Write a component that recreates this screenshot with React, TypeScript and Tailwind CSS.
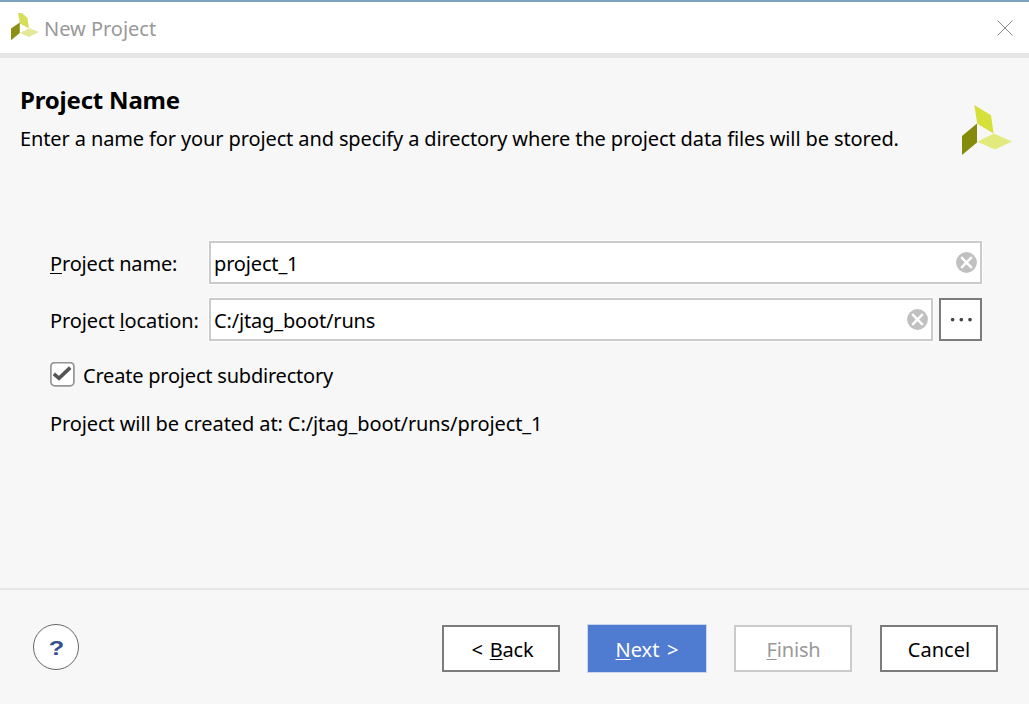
import React from "react";

function Logo({ className }: { className?: string }) {
  return (
    <svg viewBox="0 0 50 50" className={className} aria-hidden="true">
      <path d="M12.3 0 29 10.3 31.6 28.6 15.3 18.7Z" fill="#d6e03a" />
      <path d="M0 31 15 18.5V37.5L0 50Z" fill="#848a0b" />
      <path d="M15.3 36.8 31.8 28.6 50 36.5 33 44.5Z" fill="#e3ea7d" />
    </svg>
  );
}

function TitleLogo() {
  return (
    <svg viewBox="0 0 28 28" className="mb-px size-7" aria-hidden="true">
      <path d="M7 0H11L16.5 5 18 15.5 8.8 10.5Z" fill="#d6de5c" />
      <path d="M0 15.5 8.8 9.5V20L0 27.2Z" fill="#8b8f14" />
      <path d="M8.8 20 18.3 15.2 28 19 18 24Z" fill="#e4e89a" />
    </svg>
  );
}

function ClearIcon() {
  return (
    <svg viewBox="0 0 22 22" className="size-[22px] shrink-0" aria-hidden="true">
      <circle cx="11.5" cy="10.5" r="10.4" fill="#c0c0c0" />
      <path d="M6.2 5.2 16.8 15.8M16.8 5.2 6.2 15.8" stroke="#fff" strokeWidth="2.4" fill="none" />
    </svg>
  );
}

function Key({ children }: { children: string }) {
  return (
    <span className="underline decoration-1 underline-offset-[2px] [text-decoration-skip-ink:none]">
      {children}
    </span>
  );
}

function Field({ value, width }: { value: string; width: string }) {
  return (
    <div
      className={`flex h-[43px] items-center justify-between border-2 border-[#cbcbcb] bg-white pr-[3px] pl-[3px] outline outline-[#fcfcfc] ${width}`}
    >
      <span className="pt-0.5 tracking-[-0.16px]">{value}</span>
      <ClearIcon />
    </div>
  );
}

export default function App() {
  return (
    <div className="flex h-[704px] w-[1029px] flex-col overflow-hidden bg-[#f7f7f7] font-['Noto_Sans',sans-serif] text-[20px] leading-7 whitespace-nowrap text-black">
      <header className="flex h-[58px] shrink-0 items-center justify-between border-t-2 border-b-[5px] border-t-[#7ba3bd] border-b-[#e6e6e6] bg-white pr-4 pl-[11px]">
        <div className="flex items-center gap-[5px]">
          <TitleLogo />
          <h1 className="pt-0.5 tracking-[-0.02px] text-[#999]">New Project</h1>
        </div>
        <svg viewBox="0 0 16 16" className="size-4" aria-hidden="true">
          <path d="M.5.5 15.5 15.5M15.5.5.5 15.5" stroke="#888" strokeWidth="1" fill="none" />
        </svg>
      </header>

      <main className="flex h-[530px] shrink-0 flex-col">
        <section className="flex h-[183px] justify-between pr-[17px] pl-5">
          <div className="pt-[27px]">
            <h2 className="text-[24px] leading-[30px] font-bold tracking-[-0.2px]">Project Name</h2>
            <p className="pt-[10px] tracking-[-0.12px]">
              Enter a name for your project and specify a directory where the project data files will be stored.
            </p>
          </div>
          <Logo className="mt-[47px] size-[50px]" />
        </section>

        <form className="flex flex-col pl-[50px]">
          <div className="flex items-center">
            <label className="w-[159px] pt-0.5 tracking-[-0.17px]">
              <Key>P</Key>roject name:
            </label>
            <Field value="project_1" width="w-[773px]" />
          </div>
          <div className="mt-[14px] flex items-center">
            <label className="w-[159px] pt-0.5 tracking-[-0.12px]">
              Project <Key>l</Key>ocation:
            </label>
            <Field value="C:/jtag_boot/runs" width="w-[724px]" />
            <button type="button" className="ml-[6px] flex size-[43px] items-center justify-center border-2 border-[#7c7c7c] bg-white">
              <svg viewBox="0 0 22 4" className="h-1 w-[22px]" fill="#444" aria-hidden="true">
                <circle cx="2.6" cy="1.7" r="1.8" />
                <circle cx="11.3" cy="1.7" r="1.8" />
                <circle cx="20" cy="1.7" r="1.8" />
              </svg>
            </button>
          </div>
          <div className="mt-5 flex h-[27px] items-center">
            <svg viewBox="0 0 25 25" className="size-[25px]" aria-hidden="true">
              <rect x="0.9" y="0.6" width="23" height="23.2" rx="3.8" fill="#fff" stroke="#959595" strokeWidth="1.7" />
              <path d="M3.9 11.9 9 16.4 20.2 5.6" fill="none" stroke="#555" strokeWidth="3.6" />
            </svg>
            <span className="pt-[3px] pl-2 tracking-[-0.21px]">Create project subdirectory</span>
          </div>
          <p className="mt-[22px] tracking-[-0.1px]">Project will be created at: C:/jtag_boot/runs/project_1</p>
        </form>
      </main>

      <footer className="flex h-[116px] shrink-0 items-start justify-between border-t-2 border-[#e6e6e6] pt-[34px] pr-[31px] pl-[33px]">
        <button type="button" className="flex size-[46px] items-center justify-center rounded-full border border-[#666] bg-white font-['Liberation_Sans',sans-serif] text-[21px] font-bold text-[#34508f]">
          <span className="scale-x-[1.2] pt-px">?</span>
        </button>
        <div className="flex gap-[28px] pt-px">
          <button type="button" className="h-[47px] w-[118px] border-2 border-[#7c7c7c] bg-white pt-0.5 pl-[3px] tracking-[-0.2px] [word-spacing:2px]">
            &lt; <Key>B</Key>ack
          </button>
          <button type="button" className="h-[47px] w-[118px] bg-[#4f7bd0] pt-0.5 tracking-normal text-white outline outline-[#cbd7ef] [word-spacing:2.5px]">
            <Key>N</Key>ext &gt;
          </button>
          <button type="button" className="h-[47px] w-[118px] border-2 border-[#cbcbcb] bg-white pt-0.5 pl-px tracking-[-0.15px] text-[#999]">
            <Key>F</Key>inish
          </button>
          <button type="button" className="h-[47px] w-[118px] border-2 border-[#7c7c7c] bg-white pt-0.5 tracking-[0px]">
            Cancel
          </button>
        </div>
      </footer>
    </div>
  );
}
